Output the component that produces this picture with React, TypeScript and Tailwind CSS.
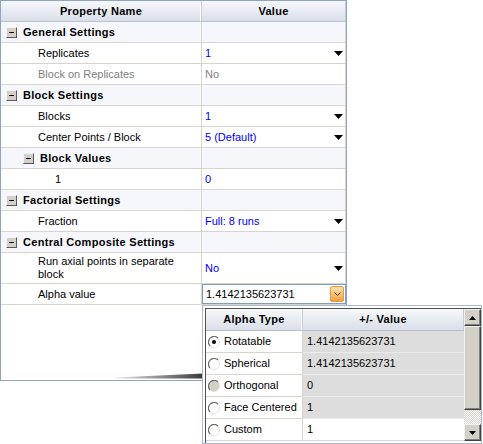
import type { ReactNode } from "react";

const line = "border-[#d8d5cd]";

function MinusBox() {
  return (
    <span className="flex h-[11px] w-[11px] shrink-0 items-center justify-center border border-t-[#f4f4f4] border-l-[#f4f4f4] border-r-[#5a5a5a] border-b-[#5a5a5a] bg-[#d4d0c8]">
      <span className="h-px w-[5px] bg-black" />
    </span>
  );
}

function DropArrow() {
  return (
    <svg width="9" height="5" viewBox="0 0 9 5" className="shrink-0">
      <polygon points="0,0 9,0 4.5,5" fill="#000" />
    </svg>
  );
}

function GroupRow({ label, nested }: { label: string; nested?: boolean }) {
  return (
    <div className={`flex h-[21px] shrink-0 border-b ${line} bg-[#f6f7fc]`}>
      <div
        className={`flex w-[201px] items-center gap-[6px] border-r ${line} ${nested ? "pl-[22px]" : "pl-[5px]"}`}
      >
        <MinusBox />
        <span className="font-bold tracking-[0.3px]">{label}</span>
      </div>
      <div className={`flex-1 border-r ${line}`} />
    </div>
  );
}

function ItemRow({
  label,
  value,
  tone = "blue",
  arrow,
  pad = "pl-[37px]",
  tall,
}: {
  label: ReactNode;
  value: ReactNode;
  tone?: "blue" | "gray";
  arrow?: boolean;
  pad?: string;
  tall?: boolean;
}) {
  const labelColor = tone === "gray" ? "text-[#808080]" : "text-black";
  const valueColor = tone === "gray" ? "text-[#808080]" : "text-[#0000ff]";
  return (
    <div className={`flex ${tall ? "h-[31px]" : "h-[21px]"} shrink-0 border-b ${line} bg-white`}>
      <div className={`flex w-[201px] items-center border-r ${line} ${pad} ${labelColor} leading-[13px]`}>
        {label}
      </div>
      <div className={`flex flex-1 items-center justify-between border-r ${line} pl-[3px] pr-[2px] ${valueColor}`}>
        <span>{value}</span>
        {arrow && <DropArrow />}
      </div>
    </div>
  );
}

function Radio({ checked, disabled }: { checked?: boolean; disabled?: boolean }) {
  return (
    <svg width="12" height="12" viewBox="0 0 12 12" className="shrink-0">
      <circle cx="6" cy="6" r="5.5" fill={disabled ? "#d4d0c8" : "#fff"} />
      <path d="M10 2 A5.66 5.66 0 0 0 2 10" stroke="#6a6a6a" strokeWidth="1.2" fill="none" />
      <path d="M2 10 A5.66 5.66 0 0 0 10 2" stroke="#e4e2dc" strokeWidth="1" fill="none" />
      {checked && <circle cx="6" cy="6" r="2" fill="#000" />}
    </svg>
  );
}

function ScrollButton({ up }: { up?: boolean }) {
  return (
    <div className="flex h-[17px] w-[17px] items-center justify-center border border-t-[#f0f0f0] border-l-[#f0f0f0] border-r-[#404040] border-b-[#404040] bg-[#d4d0c8] shadow-[inset_-1px_-1px_#808080]">
      <svg width="7" height="4" viewBox="0 0 7 4">
        <polygon points={up ? "0,4 7,4 3.5,0" : "0,0 7,0 3.5,4"} fill="#000" />
      </svg>
    </div>
  );
}

const alphaRows = [
  { type: "Rotatable", value: "1.4142135623731", checked: true },
  { type: "Spherical", value: "1.4142135623731" },
  { type: "Orthogonal", value: "0", disabled: true },
  { type: "Face Centered", value: "1" },
  { type: "Custom", value: "1", editable: true },
];

function AlphaPopup() {
  return (
    <div className="absolute left-[202px] top-[305px] h-[139px] w-[280px] border border-[#a7b9d3] bg-white pl-[2px] pt-[2px]">
      <div className="flex h-full border-l border-t border-[#505050]">
        <div className="flex flex-1 flex-col">
          <div className="flex h-[22px] shrink-0 border-b border-[#b8bfcb] bg-linear-to-b from-[#f7f8fb] to-[#d9dfe9] font-bold tracking-[0.3px]">
            <div className="flex w-[97px] items-center justify-center border-r border-[#c6ccd6] shadow-[inset_-1px_0_#ffffff]">
              Alpha Type
            </div>
            <div className="flex flex-1 items-center justify-center border-r border-[#c6ccd6]">+/- Value</div>
          </div>
          {alphaRows.map((r) => (
            <div key={r.type} className="flex h-[22px] shrink-0">
              <div className={`flex w-[97px] items-center gap-[4px] border-r border-b ${line} bg-white pl-[2px]`}>
                <Radio checked={r.checked} disabled={r.disabled} />
                <span>{r.type}</span>
              </div>
              <div
                className={`flex flex-1 items-center border-b pl-[4px] ${
                  r.editable ? `bg-white ${line}` : "border-[#ececec] bg-[#dddddd]"
                }`}
              >
                {r.value}
              </div>
            </div>
          ))}
        </div>
        <div className="flex h-[132px] w-[17px] flex-col">
          <ScrollButton up />
          <div className="h-[84px] w-[17px] border border-t-[#f0f0f0] border-l-[#f0f0f0] border-r-[#404040] border-b-[#404040] bg-[#d4d0c8] shadow-[inset_-1px_-1px_#808080]" />
          <div className="flex-1 bg-[repeating-conic-gradient(#d4d0c8_0%_25%,#ffffff_0%_50%)] bg-[length:2px_2px]" />
          <ScrollButton />
        </div>
      </div>
    </div>
  );
}

export default function App() {
  return (
    <div className="relative h-[444px] w-[483px] bg-white font-['Liberation_Sans',Arial,sans-serif] text-[11px] text-black">
      <div className="flex h-[381px] w-[347px] flex-col border border-[#8da4c6] bg-white">
        <div className="flex h-[21px] shrink-0 border-b border-[#bcc3cf] bg-linear-to-b from-[#f7f8fb] to-[#d9dfe9] font-bold tracking-[0.3px]">
          <div className="flex w-[201px] items-center justify-center border-r border-[#c6ccd6] shadow-[inset_-1px_0_#ffffff]">
            Property Name
          </div>
          <div className="flex flex-1 items-center justify-center border-r border-[#c6ccd6]">Value</div>
        </div>

        <GroupRow label="General Settings" />
        <ItemRow label="Replicates" value="1" arrow />
        <ItemRow label="Block on Replicates" value="No" tone="gray" />
        <GroupRow label="Block Settings" />
        <ItemRow label="Blocks" value="1" arrow />
        <ItemRow label="Center Points / Block" value="5 (Default)" arrow />
        <GroupRow label="Block Values" nested />
        <ItemRow label="1" value="0" pad="pl-[54px]" />
        <GroupRow label="Factorial Settings" />
        <ItemRow label="Fraction" value="Full: 8 runs" arrow />
        <GroupRow label="Central Composite Settings" />
        <ItemRow
          label={
            <span>
              Run axial points in separate
              <br />
              block
            </span>
          }
          value="No"
          arrow
          tall
        />
        <div className={`flex h-[21px] shrink-0 border-b ${line} bg-white`}>
          <div className={`flex w-[201px] items-center border-r ${line} pl-[37px]`}>Alpha value</div>
          <div className="flex flex-1 items-center justify-between border border-[#7f9db9] pl-[3px] pr-px">
            <span>1.4142135623731</span>
            <span className="flex h-[16px] w-[14px] items-center justify-center rounded-[2px] border border-[#e09a48] bg-linear-to-b from-[#ffe3b0] to-[#f5a03a]">
              <svg width="7" height="4" viewBox="0 0 7 4">
                <polyline points="0.5,0.5 3.5,3.5 6.5,0.5" fill="none" stroke="#5a3a10" strokeWidth="1" />
              </svg>
            </span>
          </div>
        </div>
      </div>

      <svg className="absolute left-[110px] top-[372px]" width="93" height="8" viewBox="0 0 93 8">
        <defs>
          <linearGradient id="shade" x1="0" x2="1" y1="0" y2="0">
            <stop offset="0" stopColor="#e8e8e8" />
            <stop offset="1" stopColor="#3a3a3a" />
          </linearGradient>
        </defs>
        <polygon points="5,5.5 93,1.5 93,6.5 5,6.5" fill="url(#shade)" />
      </svg>

      <AlphaPopup />
    </div>
  );
}
